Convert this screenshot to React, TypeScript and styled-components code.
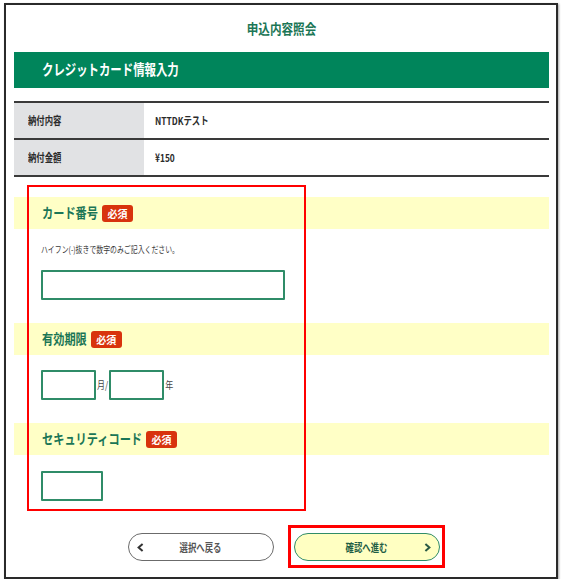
import * as React from 'react';
import styled, { createGlobalStyle, css } from 'styled-components';

const colors = {
  GREEN: '#00855b',
  GREEN_TEXT: '#1b7656',
  INPUT: '#2f8c68',
  YELLOW: '#ffffc6',
  RED: '#d8330d',
  LINE: '#3a3a3a',
  GRAY: '#e1e2e4',
  TEXT: '#333333',
};

const GlobalStyle = createGlobalStyle`
  html, body {
    margin: 0;
    padding: 0;
    background: #ffffff;
  }
  body {
    font-family: "Noto Sans CJK JP", "Noto Sans", sans-serif;
    color: ${colors.TEXT};
  }
`;

// the screenshot text is narrow and tall, so size by width and stretch up
const tall = (k: number) => css`
  display: inline-block;
  transform: scaleY(${k});
  line-height: 1;
`;

const Frame = styled.div`
  box-sizing: border-box;
  width: 554px;
  height: 576px;
  margin: 3px 0 0 4px;
  padding: 0 7px 0 8px;
  border: 2px solid #2a2a2a;
  box-shadow: 1px 1px 2px rgba(0, 0, 0, 0.35);
  background: #ffffff;
`;

const TitleRow = styled.div`
  height: 47px;
  display: flex;
  align-items: center;
  justify-content: center;
`;

const PageTitle = styled.h1`
  margin: 0;
  font-size: 11.6px;
  font-weight: 700;
  color: ${colors.GREEN_TEXT};
  ${tall(1.2)};
`;

const Bar = styled.div`
  height: 36px;
  display: flex;
  align-items: center;
  padding-left: 28px;
  background: ${colors.GREEN};
`;

const BarTitle = styled.h2`
  margin: 0;
  font-size: 11.4px;
  font-weight: 700;
  color: #ffffff;
  ${tall(1.3)};
`;

const Table = styled.div`
  margin-top: 13px;
  border-top: 2px solid ${colors.LINE};
`;

const Row = styled.div`
  display: grid;
  grid-template-columns: 130px 1fr;
  height: 35px;
  border-bottom: 2px solid ${colors.LINE};
`;

const Label = styled.div`
  display: flex;
  align-items: center;
  padding-left: 14px;
  background: ${colors.GRAY};
`;

const Value = styled.div`
  display: flex;
  align-items: center;
  padding-left: 11px;
`;

const CellText = styled.span`
  font-size: 8.4px;
  font-weight: 700;
  color: #2b2b2b;
  ${tall(1.3)};
`;

const Form = styled.div`
  position: relative;
  padding-top: 20px;
`;

const Highlight = styled.div`
  position: absolute;
  box-sizing: border-box;
  top: 8px;
  left: 13px;
  width: 279px;
  height: 326px;
  border: 2px solid #ff0000;
  pointer-events: none;
`;

const Band = styled.div`
  height: 32px;
  display: flex;
  align-items: center;
  gap: 4px;
  padding-left: 28px;
  background: ${colors.YELLOW};
`;

const SectionTitle = styled.span`
  font-size: 11.2px;
  font-weight: 700;
  color: ${colors.GREEN_TEXT};
  ${tall(1.25)};
`;

const Badge = styled.span`
  display: inline-flex;
  align-items: center;
  justify-content: center;
  width: 31px;
  height: 17px;
  border-radius: 3px;
  background: ${colors.RED};
  color: #ffffff;
  font-size: 10px;
  font-weight: 700;
`;

const Body = styled.div<{ $top: number; $bottom: number }>`
  padding: ${(p) => p.$top}px 0 ${(p) => p.$bottom}px 27px;
`;

const Hint = styled.p`
  margin: 0 0 13px;
  height: 10px;
  font-size: 6.9px;
  color: #3a3a3a;
  ${tall(1.3)};
  display: block;
`;

const Field = styled.input<{ $w: number }>`
  box-sizing: border-box;
  display: block;
  width: ${(p) => p.$w}px;
  height: 30px;
  margin: 0;
  padding: 0 6px;
  border: 2px solid ${colors.INPUT};
  border-radius: 1px;
  background: #ffffff;
  outline: none;
`;

const DateRow = styled.div`
  display: flex;
  align-items: center;
`;

const Unit = styled.span`
  font-size: 8px;
  color: #444444;
  ${tall(1.3)};
  padding: 0 1px;
`;

const Buttons = styled.div`
  display: flex;
  justify-content: center;
  gap: 20px;
  margin-top: 32px;
  padding-left: 4px;
`;

const NextWrap = styled.div`
  position: relative;
`;

const NextHighlight = styled.div`
  position: absolute;
  top: -8px;
  left: -6px;
  right: -5px;
  bottom: -7px;
  border: 3px solid #ff0000;
  pointer-events: none;
`;

const Button = styled.button<{ $primary?: boolean }>`
  position: relative;
  box-sizing: border-box;
  width: 146px;
  height: 28px;
  display: flex;
  align-items: center;
  justify-content: center;
  border-radius: 14px;
  border: 1.5px solid ${(p) => (p.$primary ? colors.INPUT : '#6b6b6b')};
  background: ${(p) => (p.$primary ? '#ffffc2' : '#ffffff')};
  color: ${(p) => (p.$primary ? '#1f5e45' : '#555555')};
  font-family: inherit;
  padding: 0;
  cursor: pointer;
`;

const ButtonText = styled.span`
  font-size: 8.4px;
  font-weight: 700;
  ${tall(1.3)};
`;

const Chevron = styled.svg<{ $side: 'left' | 'right' }>`
  position: absolute;
  top: 50%;
  margin-top: -4.5px;
  ${(p) => (p.$side === 'left' ? 'left: 8px;' : 'right: 8px;')}
`;

const Required = () => <Badge>必須</Badge>;

const App: React.FC = () => (
  <>
    <GlobalStyle />
    <Frame>
      <TitleRow>
        <PageTitle>申込内容照会</PageTitle>
      </TitleRow>
      <Bar>
        <BarTitle>クレジットカード情報入力</BarTitle>
      </Bar>

      <Table>
        <Row>
          <Label>
            <CellText>納付内容</CellText>
          </Label>
          <Value>
            <CellText>NTTDKテスト</CellText>
          </Value>
        </Row>
        <Row>
          <Label>
            <CellText>納付金額</CellText>
          </Label>
          <Value>
            <CellText>¥150</CellText>
          </Value>
        </Row>
      </Table>

      <Form>
        <Band>
          <SectionTitle>カード番号</SectionTitle>
          <Required />
        </Band>
        <Body $top={18} $bottom={23}>
          <Hint>ハイフン(-)抜きで数字のみご記入ください。</Hint>
          <Field $w={244} />
        </Body>

        <Band>
          <SectionTitle>有効期限</SectionTitle>
          <Required />
        </Band>
        <Body $top={15} $bottom={23}>
          <DateRow>
            <Field $w={55} />
            <Unit>月/</Unit>
            <Field $w={55} />
            <Unit>年</Unit>
          </DateRow>
        </Body>

        <Band>
          <SectionTitle>セキュリティコード</SectionTitle>
          <Required />
        </Band>
        <Body $top={16} $bottom={0}>
          <Field $w={62} />
        </Body>

        <Highlight />
      </Form>

      <Buttons>
        <Button>
          <Chevron $side="left" width="7" height="9" viewBox="0 0 7 9">
            <polyline points="5.6,1 1.6,4.5 5.6,8" fill="none" stroke="#333" strokeWidth="2" />
          </Chevron>
          <ButtonText>選択へ戻る</ButtonText>
        </Button>
        <NextWrap>
          <Button $primary>
            <ButtonText>確認へ進む</ButtonText>
            <Chevron $side="right" width="7" height="9" viewBox="0 0 7 9">
              <polyline points="1.4,1 5.4,4.5 1.4,8" fill="none" stroke="#2a5a45" strokeWidth="2" />
            </Chevron>
          </Button>
          <NextHighlight />
        </NextWrap>
      </Buttons>
    </Frame>
  </>
);

export default App;
